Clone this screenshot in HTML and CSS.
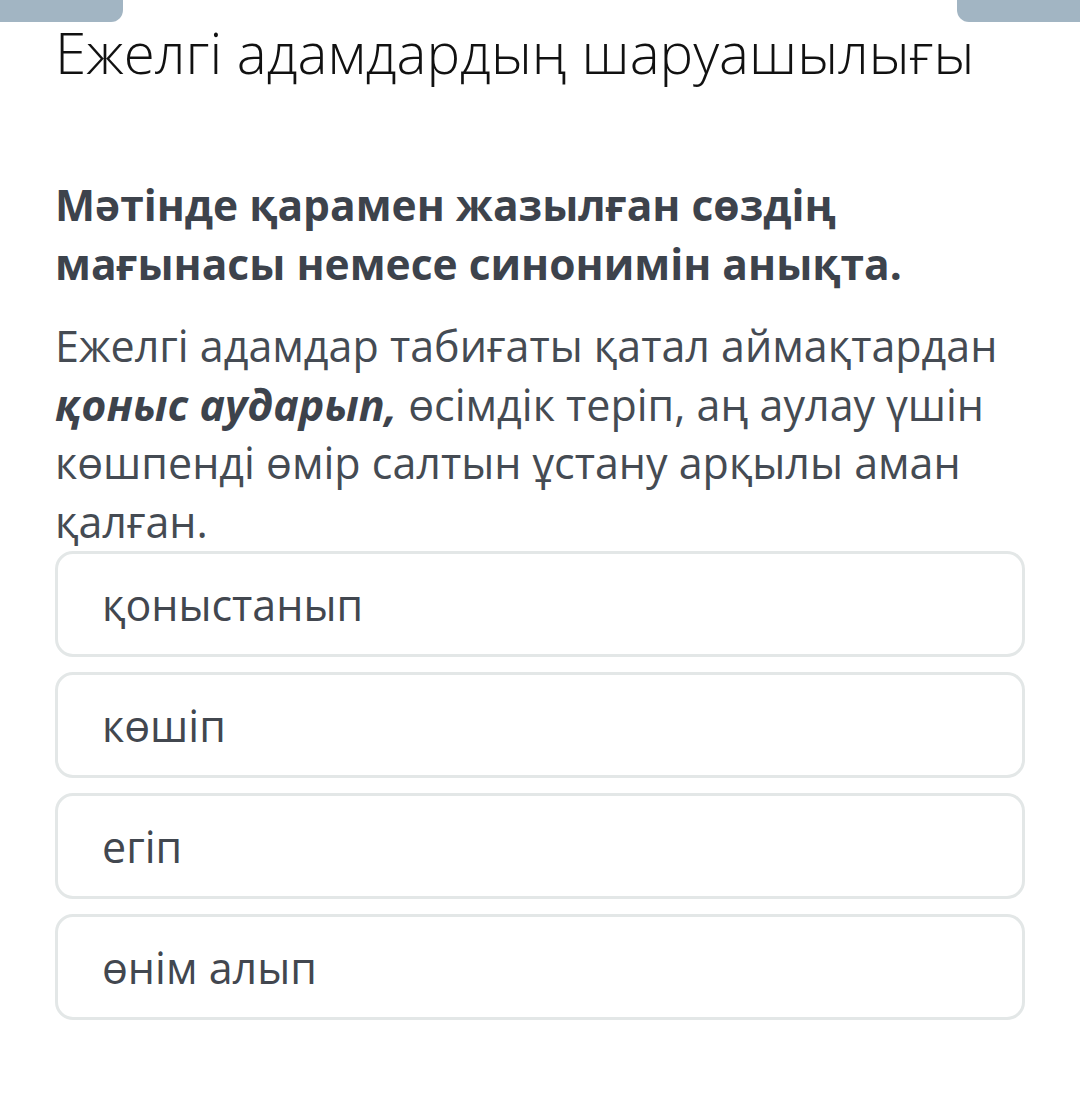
FILE: index.html
```html
<!DOCTYPE html>
<html lang="kk">
<head>
    <meta charset="UTF-8">
    <meta name="viewport" content="width=device-width, initial-scale=1.0">
    <title>Ежелгі адамдардың шаруашылығы</title>
    <link rel="stylesheet" href="styles.css">
</head>
<body>
    <div class="tabs">
        <div class="tab"></div>
        <div class="tab tab-right"></div>
    </div>
    <div class="quiz">
        <h1 class="title">Ежелгі адамдардың шаруашылығы</h1>
        <p class="question">Мәтінде қарамен жазылған сөздің мағынасы немесе синонимін анықта.</p>
        <p class="passage">Ежелгі адамдар табиғаты қатал аймақтардан <b><i>қоныс аударып,</i></b> өсімдік теріп, аң аулау үшін көшпенді өмір салтын ұстану арқылы аман қалған.</p>
        <div class="options">
            <div class="option">қоныстанып</div>
            <div class="option">көшіп</div>
            <div class="option">егіп</div>
            <div class="option">өнім алып</div>
        </div>
    </div>
</body>
</html>
```

FILE: styles.css
```css
body {
    margin: 0;
    background-color: #ffffff;
    font-family: "Open Sans", "Noto Sans", sans-serif;
}

.tabs {
    display: flex;
    justify-content: space-between;
}

.tab {
    width: 123px;
    height: 22px;
    background-color: #a2b5c3;
    border-bottom-right-radius: 12px;
}

.tab-right {
    border-bottom-right-radius: 0;
    border-bottom-left-radius: 12px;
}

.quiz {
    padding: 0 55px;
}

.title {
    margin: 1px 0 0;
    font-size: 56.5px;
    font-weight: 350;
    line-height: 60px;
    white-space: nowrap;
    color: #111111;
}

.question {
    margin: 93px 0 0;
    font-size: 42.5px;
    font-weight: 700;
    line-height: 58.5px;
    color: #3d434c;
}

.passage {
    margin: 24px 0 0;
    font-size: 43px;
    line-height: 58.5px;
    color: #454b53;
}

.passage b {
    color: #3d434c;
}

.options {
    display: flex;
    flex-direction: column;
    gap: 15px;
}

.option {
    height: 100px;
    display: flex;
    align-items: center;
    padding: 0 44px;
    border: 3px solid #e3e7e7;
    border-radius: 18px;
    font-size: 43px;
    color: #42474f;
}
```
